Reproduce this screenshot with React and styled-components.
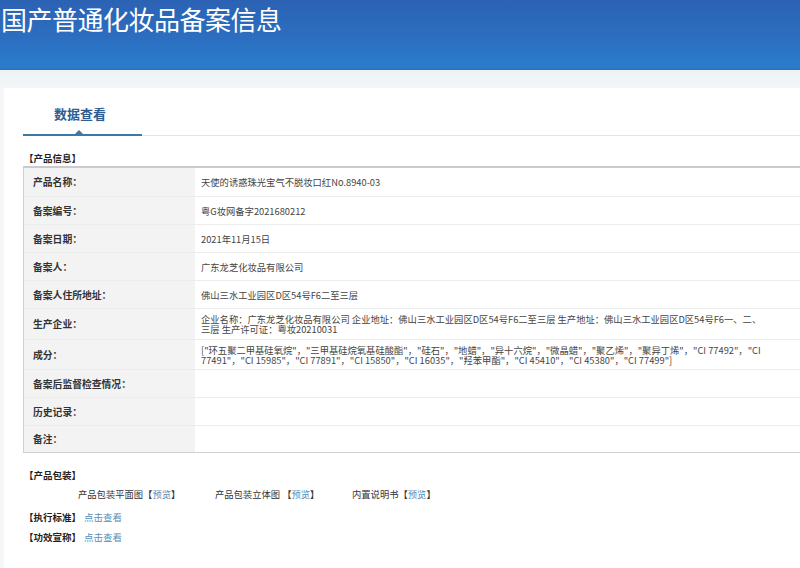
import React from "react";
import styled, { createGlobalStyle } from "styled-components";

const Global = createGlobalStyle`
  html, body { margin: 0; padding: 0; }
  body {
    width: 800px; height: 568px; overflow: hidden;
    background: #f4f6f7;
    font-family: "Noto Sans CJK SC", "Noto Sans", sans-serif;
    color: #333;
  }
`;

const Header = styled.header`
  height: 70px;
  background: linear-gradient(180deg, #2b62b4 0%, #2c6dbf 50%, #2a7dcc 96%, #2672c0 100%);
  color: #fff;
  font-size: 26px;
  line-height: 38px;
  padding-left: 1px;
  letter-spacing: -0.5px;
`;

const Band = styled.div`
  height: 18px;
  background: linear-gradient(180deg, #edf3f5, #f3f6f7);
`;

const Page = styled.main`
  margin-left: 4px;
  background: #fff;
  padding: 15px 0 0 19px;
  height: 480px;
`;

const Tabs = styled.div`
  display: flex;
  align-items: flex-end;
  border-bottom: 1px solid #e2e4e6;
`;

const Tab = styled.div`
  position: relative;
  width: 114px;
  padding: 2px 5px 11px 0;
  text-align: center;
  font-size: 13px;
  font-weight: 700;
  color: #2f5d92;
  line-height: 18px;
  border-bottom: 2px solid #3b79a6;
  margin-bottom: -1px;
  &::after {
    content: "";
    position: absolute;
    left: 52px;
    bottom: 0;
    border-left: 4px solid transparent;
    border-right: 4px solid transparent;
    border-bottom: 4px solid #3b79a6;
  }
`;

const SectionTitle = styled.div`
  font-size: 9.5px;
  font-weight: 700;
  color: #222;
  line-height: 14px;
  margin: ${(p) => p.$m || "0"};
  display: flex;
  align-items: center;
  gap: 3px;
`;

const Table = styled.div`
  width: 790px;
  border-top: 2px solid #c9cbcd;
  border-left: 1px solid #cfd1d3;
  border-bottom: 1px solid #cfd1d3;
  margin-top: 1px;
`;

const Row = styled.div`
  display: grid;
  grid-template-columns: 171px 1fr;
  height: ${(p) => p.$h}px;
  border-top: ${(p) => (p.$first ? "none" : "1px solid #ebecec")};
  box-sizing: border-box;
`;

const Label = styled.div`
  background: #f3f3f3;
  font-size: 9.8px;
  font-weight: 700;
  color: #333;
  padding-left: 9px;
  display: flex;
  align-items: center;
`;

const Value = styled.div`
  font-size: 9.3px;
  color: #444;
  padding: 0 49px 0 6px;
  display: flex;
  align-items: center;
  line-height: 10px;
`;

const Packs = styled.div`
  display: flex;
  padding-left: 55px;
  margin-top: 5px;
  font-size: 9.3px;
  color: #333;
  line-height: 14px;
`;

const Pack = styled.div`
  width: ${(p) => p.$w}px;
`;

const Link = styled.span`
  color: #5a8db4;
  font-weight: 400;
`;

const rows = [
  ["产品名称：", "天使的诱惑珠光宝气不脱妆口红No.8940-03", 28],
  ["备案编号：", "粤G妆网备字2021680212", 28],
  ["备案日期：", "2021年11月15日", 28],
  ["备案人：", "广东龙芝化妆品有限公司", 28],
  ["备案人住所地址：", "佛山三水工业园区D区54号F6二至三层", 28],
  [
    "生产企业：",
    "企业名称：广东龙芝化妆品有限公司 企业地址：佛山三水工业园区D区54号F6二至三层 生产地址：佛山三水工业园区D区54号F6一、二、三层 生产许可证：粤妆20210031",
    31,
  ],
  [
    "成分：",
    "[\"环五聚二甲基硅氧烷\"，\"三甲基硅烷氧基硅酸酯\"，\"硅石\"，\"地蜡\"，\"异十六烷\"，\"微晶蜡\"，\"聚乙烯\"，\"聚异丁烯\"，\"CI 77492\"，\"CI 77491\"，\"CI 15985\"，\"CI 77891\"，\"CI 15850\"，\"CI 16035\"，\"羟苯甲酯\"，\"CI 45410\"，\"CI 45380\"，\"CI 77499\"]",
    30,
  ],
  ["备案后监督检查情况：", "", 28],
  ["历史记录：", "", 28],
  ["备注：", "", 27],
];

export default function App() {
  return (
    <>
      <Global />
      <Header>国产普通化妆品备案信息</Header>
      <Band />
      <Page>
        <Tabs>
          <Tab>数据查看</Tab>
        </Tabs>
        <SectionTitle $m="15px 0 0 1px">【产品信息】</SectionTitle>
        <Table>
          {rows.map(([l, v, h], i) => (
            <Row key={l} $h={h} $first={i === 0}>
              <Label>{l}</Label>
              <Value>{v}</Value>
            </Row>
          ))}
        </Table>
        <SectionTitle $m="15px 0 0 1px">【产品包装】</SectionTitle>
        <Packs>
          <Pack $w={137}>产品包装平面图【<Link>预览</Link>】</Pack>
          <Pack $w={137}>产品包装立体图 【<Link>预览</Link>】</Pack>
          <Pack $w={120}>内置说明书【<Link>预览</Link>】</Pack>
        </Packs>
        <SectionTitle $m="9px 0 0 1px">
          <span>【执行标准】</span>
          <Link>点击查看</Link>
        </SectionTitle>
        <SectionTitle $m="6px 0 0 1px">
          <span>【功效宣称】</span>
          <Link>点击查看</Link>
        </SectionTitle>
      </Page>
    </>
  );
}
